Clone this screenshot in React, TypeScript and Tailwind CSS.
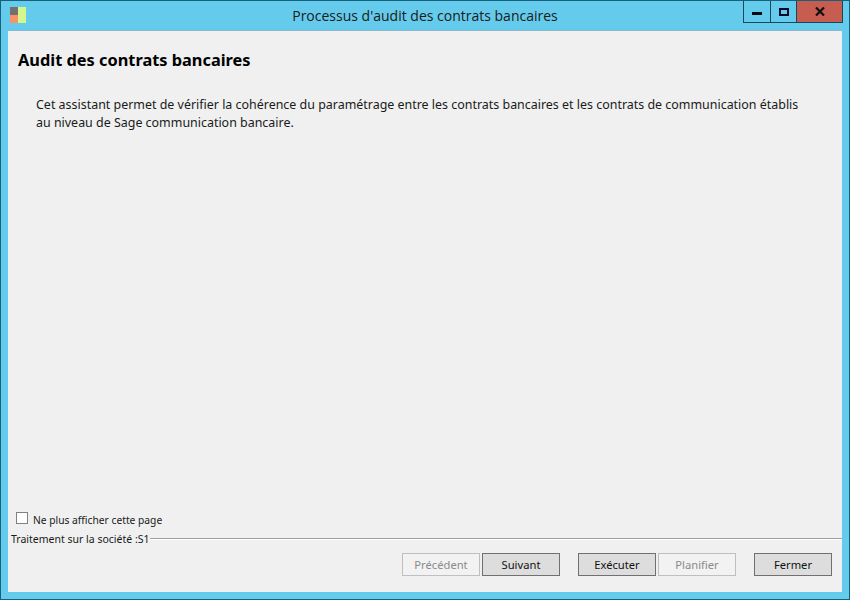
import React from "react";

const bodyFont = "font-['Noto_Sans','DejaVu_Sans',sans-serif]";

const WizardButton = ({ label, disabled }: { label: string; disabled?: boolean }) => (
  <button
    className={
      disabled
        ? "block w-[78px] h-[23px] border border-[#bfbfbf] bg-[#f2f2f2] text-[11.2px] leading-none text-[#8a8a8a]"
        : "block w-[78px] h-[23px] border border-[#707070] bg-[#dddddd] text-[11.2px] leading-none text-[#111111]"
    }
  >
    {label}
  </button>
);

const App = () => {
  return (
    <div className={`w-[850px] h-[600px] flex flex-col border border-[#17607c] bg-[#65cbec] ${bodyFont}`}>
      {/* Title bar */}
      <div className="h-[29px] grid grid-cols-[1fr_auto_1fr] shrink-0">
        <div className="pl-[9px] pt-[6px]">
          <svg width="17" height="17" viewBox="0 0 17 17">
            <rect x="0" y="0" width="8" height="8" fill="#717171" />
            <rect x="0" y="8" width="8" height="8" fill="#fb9266" />
            <rect x="8" y="0" width="8" height="16" fill="#d3f68f" />
          </svg>
        </div>
        <div className="font-['Open_Sans',sans-serif] text-[14px] leading-[30px] text-[#1a1a1a]">
          Processus d'audit des contrats bancaires
        </div>
        <div className="flex justify-end pr-[6px]">
          <div className="flex h-[22px] border border-t-0 border-[#17485c]">
            <div className="w-[27px] flex items-center justify-center border-r border-[#17485c]">
              <div className="w-[10px] h-[3px] mt-[3px] bg-[#0a0a14]" />
            </div>
            <div className="w-[26px] flex items-center justify-center border-r border-[#17485c]">
              <div className="w-[10px] h-[8px] border-2 border-[#0a0a28]" />
            </div>
            <div className="w-[45px] flex items-center justify-center bg-[#c75c50]">
              <svg width="10" height="9" viewBox="0 0 10 9">
                <path d="M1 0.5 L9 8.5 M9 0.5 L1 8.5" stroke="#111111" strokeWidth="2.2" fill="none" />
              </svg>
            </div>
          </div>
        </div>
      </div>

      {/* Client area */}
      <div className="mx-[7px] mb-[7px] flex-1 flex flex-col bg-[#f0f0f0] border-t border-[#8bb8cc] min-h-0">
        <h1 className="mt-[18px] ml-[10px] text-[16.35px] leading-[22px] font-bold text-black">
          Audit des contrats bancaires
        </h1>
        <p className="mt-[25px] ml-[28px] w-[770px] text-[12.45px] leading-[18px] text-[#1a1a1a]">
          Cet assistant permet de vérifier la cohérence du paramétrage entre les contrats bancaires et les contrats de communication établis au niveau de Sage communication bancaire.
        </p>

        <div className="mt-auto">
          <label className="flex items-center ml-[8px] h-[14px]">
            <span className="w-[12px] h-[12px] border border-[#808080] bg-white" />
            <span className="ml-[5px] mt-[4px] text-[10.25px] leading-none text-[#1a1a1a]">Ne plus afficher cette page</span>
          </label>
          <div className="flex items-center mt-[7px] ml-[3px] h-[14px]">
            <span className="text-[10.5px] leading-none text-[#1a1a1a] whitespace-nowrap">Traitement sur la société :S1</span>
            <div className="flex-1 border-t border-b border-t-[#a0a0a0] border-b-white h-[2px]" />
          </div>
          <div className="flex items-start justify-end pr-[10px] pt-[7px] pb-[16px]">
            <WizardButton label="Précédent" disabled />
            <div className="ml-[2px]"><WizardButton label="Suivant" /></div>
            <div className="ml-[18px]"><WizardButton label="Exécuter" /></div>
            <div className="ml-[2px]"><WizardButton label="Planifier" disabled /></div>
            <div className="ml-[18px]"><WizardButton label="Fermer" /></div>
          </div>
        </div>
      </div>
    </div>
  );
};

export default App;
